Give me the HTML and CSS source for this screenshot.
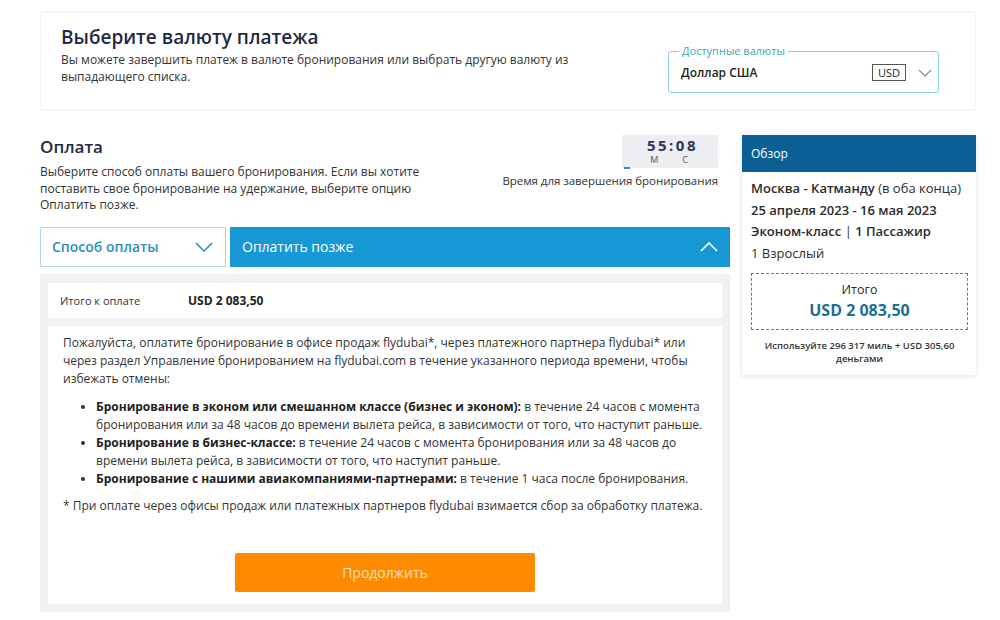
FILE: index.html
```html
<!DOCTYPE html>
<html>

	<head>
		<meta charset="UTF-8">
		<title>Оплата</title>
		<link rel="stylesheet" href="styles.css">
	</head>

	<body>
		<div class="currency">
			<div class="currency_text">
				<h1>Выберите валюту платежа</h1>
				<p>Вы можете завершить платеж в валюте бронирования или выбрать другую валюту из выпадающего списка.</p>
			</div>
			<fieldset class="currency_select">
				<legend>Доступные валюты</legend>
				<span class="currency_name">Доллар США</span>
				<span class="currency_code">USD</span>
				<svg class="chevron" width="14" height="8" viewBox="0 0 14 8"><path d="M1 1l6 6 6-6" fill="none" stroke="#8a9097" stroke-width="1.3"/></svg>
			</fieldset>
		</div>

		<div class="main">
			<div class="payment">
				<div class="payment_head">
					<div class="payment_intro">
						<h2>Оплата</h2>
						<p>Выберите способ оплаты вашего бронирования. Если вы хотите поставить свое бронирование на удержание, выберите опцию Оплатить позже.</p>
					</div>
					<div class="timer">
						<div class="timer_box">
							<div class="timer_digits">55:08</div>
							<div class="timer_units"><span>М</span><span>С</span></div>
							<i class="timer_bar"></i>
						</div>
						<div class="timer_label">Время для завершения бронирования</div>
					</div>
				</div>

				<div class="tabs">
					<div class="tab tab_method">
						<span>Способ оплаты</span>
						<svg width="18" height="10" viewBox="0 0 18 10"><path d="M1 1l8 8 8-8" fill="none" stroke="#2b8fc0" stroke-width="1.6"/></svg>
					</div>
					<div class="tab tab_later">
						<span>Оплатить позже</span>
						<svg width="18" height="10" viewBox="0 0 18 10"><path d="M1 9l8-8 8 8" fill="none" stroke="#fff" stroke-width="1.6"/></svg>
					</div>
				</div>

				<div class="panel">
					<div class="total_row">
						<span class="total_label">Итого к оплате</span>
						<span class="total_value">USD 2 083,50</span>
					</div>
					<div class="info">
						<p>Пожалуйста, оплатите бронирование в офисе продаж flydubai*, через платежного партнера flydubai* или через раздел Управление бронированием на flydubai.com в течение указанного периода времени, чтобы избежать отмены:</p>
						<ul>
							<li><b>Бронирование в эконом или смешанном классе (бизнес и эконом):</b> в течение 24 часов с момента бронирования или за 48 часов до времени вылета рейса, в зависимости от того, что наступит раньше.</li>
							<li><b>Бронирование в бизнес-классе:</b> в течение 24 часов с момента бронирования или за 48 часов до времени вылета рейса, в зависимости от того, что наступит раньше.</li>
							<li><b>Бронирование с нашими авиакомпаниями-партнерами:</b> в течение 1 часа после бронирования.</li>
						</ul>
						<p class="note">* При оплате через офисы продаж или платежных партнеров flydubai взимается сбор за обработку платежа.</p>
						<div class="actions">
							<a href="javascript:;" class="btn_continue">Продолжить</a>
						</div>
					</div>
				</div>
			</div>

			<div class="summary">
				<div class="summary_head">Обзор</div>
				<div class="summary_body">
					<div class="summary_line"><b>Москва - Катманду</b> (в оба конца)</div>
					<div class="summary_line"><b>25 апреля 2023 - 16 мая 2023</b></div>
					<div class="summary_line"><b>Эконом-класс</b> | <b>1 Пассажир</b></div>
					<div class="summary_line">1 Взрослый</div>
					<div class="summary_total">
						<div>Итого</div>
						<div class="summary_price">USD 2 083,50</div>
					</div>
					<p class="summary_miles">Используйте 296 317 миль + USD 305,60 деньгами</p>
				</div>
			</div>
		</div>
	</body>

</html>
```
FILE: styles.css
```css
* {
	margin: 0;
	padding: 0;
	box-sizing: border-box;
}

body {
	background: #fff;
	font-family: "Open Sans", "Noto Sans", sans-serif;
	color: #2b2b2b;
}

a {
	text-decoration: none;
}

/* блок выбора валюты */
.currency {
	display: flex;
	justify-content: space-between;
	align-items: center;
	margin: 12px 24px 0 40px;
	height: 98px;
	padding: 0 36px 0 20px;
	border: 1px solid #f1f2f3;
	box-shadow: 0 0 3px rgba(0, 0, 0, 0.04);
}

.currency_text {
	margin-top: -12px;
}

.currency h1 {
	font-size: 19px;
	font-weight: 600;
	color: #1f2b45;
	line-height: 24px;
}

.currency p {
	width: 530px;
	font-size: 12px;
	line-height: 17px;
	color: #333;
	margin-top: 2px;
}

.currency_select {
	display: flex;
	align-items: center;
	width: 271px;
	height: 48px;
	margin-top: 16px;
	padding: 0 6px 4px 12px;
	border: 1px solid #8fcfd9;
	border-radius: 3px;
}

.currency_select legend {
	margin-left: -2px;
	padding: 0 3px;
	font-size: 11px;
	color: #3ba8b9;
	line-height: 12px;
}

.currency_name {
	flex: 1;
	font-size: 12px;
	font-weight: 600;
	color: #222;
}

.currency_code {
	border: 1px solid #555;
	padding: 0 5px;
	font-size: 11px;
	line-height: 15px;
	color: #222;
	margin-right: 12px;
}

/* основная часть */
.main {
	display: flex;
	gap: 12px;
	margin: 25px 24px 0 40px;
}

.payment {
	width: 690px;
}

.payment_head {
	display: flex;
	justify-content: space-between;
}

.payment_intro h2 {
	font-size: 17px;
	font-weight: 600;
	color: #1f2b45;
	line-height: 24px;
}

.payment_intro p {
	width: 400px;
	margin-top: 5px;
	font-size: 12px;
	line-height: 16.5px;
	color: #333;
}

.timer {
	display: flex;
	flex-direction: column;
	align-items: flex-end;
	margin-right: 12px;
}

.timer_box {
	position: relative;
	width: 96px;
	height: 33px;
	background: #eceef1;
	padding: 2px 20px 0 0;
	text-align: right;
}

.timer_digits {
	font-size: 15px;
	font-weight: 700;
	letter-spacing: 2.5px;
	color: #2a3552;
	line-height: 17px;
}

.timer_units {
	display: flex;
	justify-content: flex-end;
	gap: 24px;
	padding-right: 10px;
	font-size: 9px;
	line-height: 11px;
	color: #555;
}

.timer_bar {
	position: absolute;
	left: 2px;
	bottom: -1px;
	width: 6px;
	height: 2px;
	background: #2a8fbd;
}

.timer_label {
	margin-top: 5px;
	font-size: 11.5px;
	color: #333;
	letter-spacing: -0.05px;
}

.tabs {
	display: flex;
	gap: 4px;
	margin-top: 13px;
	height: 40px;
}

.tab {
	display: flex;
	align-items: center;
	justify-content: space-between;
	font-size: 14px;
	font-weight: 600;
}

.tab_method {
	width: 186px;
	padding: 0 12px 0 11px;
	border: 1px solid #b7d6e6;
	color: #2b8fc0;
}

.tab_later {
	flex: 1;
	padding: 0 12px 0 12px;
	background: #1897d5;
	color: #fff;
	font-weight: 500;
}

.panel {
	margin-top: 7px;
	padding: 9px 8px 8px;
	background: #f1f1f1;
}

.total_row {
	display: flex;
	align-items: center;
	height: 35px;
	padding: 0 12px;
	background: #fff;
}

.total_label {
	width: 128px;
	font-size: 11px;
	color: #333;
}

.total_value {
	font-size: 12px;
	font-weight: 700;
	color: #222;
}

.info {
	margin-top: 8px;
	background: #fff;
	padding: 8px 15px 12px;
	font-size: 12px;
	line-height: 18px;
	color: #333;
}

.info ul {
	margin: 10px 0 0 33px;
}

.info li b {
	font-weight: 700;
	color: #222;
}

.info .note {
	margin-top: 9px;
}

.actions {
	display: flex;
	justify-content: center;
	margin-top: 38px;
}

.btn_continue {
	display: block;
	width: 300px;
	height: 39px;
	line-height: 39px;
	text-align: center;
	background: #ff8a00;
	border-radius: 2px;
	color: #ffe0bd;
	font-size: 14px;
}

/* обзор */
.summary {
	width: 234px;
	height: 240px;
	box-shadow: 0 1px 5px rgba(0, 0, 0, 0.12);
}

.summary_head {
	height: 37px;
	line-height: 37px;
	padding-left: 9px;
	background: #0c5f95;
	color: #fff;
	font-size: 12px;
}

.summary_body {
	padding: 6px 8px 0 9px;
	font-size: 13px;
	color: #2b2b2b;
}

.summary_line {
	line-height: 21.5px;
}

.summary_line b {
	font-weight: 600;
}

.summary_total {
	margin-top: 9px;
	height: 57px;
	border: 1px dashed #5f7b90;
	text-align: center;
	padding-top: 7px;
	font-size: 12.5px;
	line-height: 18px;
}

.summary_price {
	font-size: 16px;
	font-weight: 700;
	color: #1b6f95;
	line-height: 22px;
}

.summary_miles {
	margin-top: 9px;
	padding: 0 12px;
	text-align: center;
	font-size: 9.5px;
	font-weight: 600;
	line-height: 13px;
	color: #333;
}
```
